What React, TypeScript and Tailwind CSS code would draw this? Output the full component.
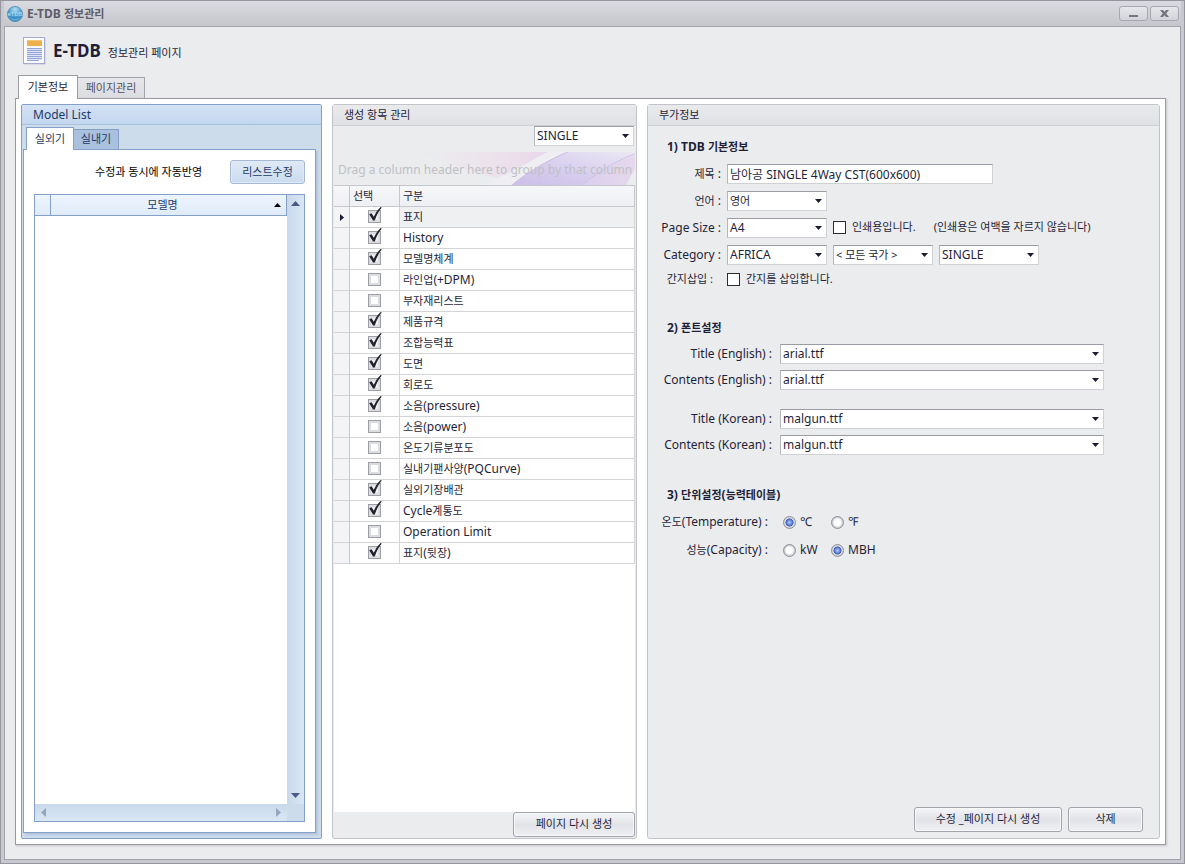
import React from "react";

const HANGUL = /([\u3131-\u318e\uac00-\ud7a3]+(?:\s+[\u3131-\u318e\uac00-\ud7a3]+)*)/;

/** Sets Hangul runs one pixel smaller than the Latin text around them. */
function T({ children }: { children: string }) {
  return (
    <>
      {children.split(HANGUL).map((part, i) =>
        i % 2 === 1 ? (
          <span key={i} className="text-[11px]">
            {part}
          </span>
        ) : (
          part
        )
      )}
    </>
  );
}

function Triangle({ dir, className }: { dir: "up" | "down" | "left" | "right"; className: string }) {
  const d = {
    up: "M0 5 L4.5 0 L9 5 Z",
    down: "M0 0 L9 0 L4.5 5 Z",
    left: "M5 0 L5 9 L0 4.5 Z",
    right: "M0 0 L5 4.5 L0 9 Z",
  }[dir];
  const vertical = dir === "up" || dir === "down";
  return (
    <svg
      className={className}
      width={vertical ? 9 : 5}
      height={vertical ? 5 : 9}
      viewBox={vertical ? "0 0 9 5" : "0 0 5 9"}
      aria-hidden="true"
    >
      <path d={d} fill="currentColor" />
    </svg>
  );
}

function Select({
  id,
  label,
  options,
  className,
  small,
}: {
  id?: string;
  label?: string;
  options: string[];
  className: string;
  small?: boolean;
}) {
  return (
    <span className={`relative inline-flex h-5 ${className}`}>
      <select
        id={id}
        aria-label={label}
        className={`h-5 w-full appearance-none border border-[#d0d1d5] border-t-[#9a9ba3] border-l-[#b5b6bc] bg-white pl-[2px] pr-4 leading-[18px] outline-none ${
          small ? "text-[11px]" : "text-xs"
        }`}
      >
        {options.map((o) => (
          <option key={o}>{o}</option>
        ))}
      </select>
      <svg
        className="pointer-events-none absolute right-[5px] top-2 text-[#1b1b33]"
        width="7"
        height="4"
        viewBox="0 0 7 4"
        aria-hidden="true"
      >
        <path d="M0 0 H7 L3.5 4 Z" fill="currentColor" />
      </svg>
    </span>
  );
}

function GridCheck({ label, checked }: { label: string; checked: boolean }) {
  return (
    <span className="relative mx-auto block size-[13px]">
      <input
        type="checkbox"
        defaultChecked={checked}
        aria-label={label}
        className="peer block size-[13px] appearance-none border border-[#9c9da5] bg-white shadow-[inset_0_0_0_2px_#dcdde1] checked:bg-[#f0f0f3]"
      />
      <svg
        className="pointer-events-none absolute -top-1 left-0 hidden peer-checked:block"
        width="14"
        height="16"
        viewBox="0 0 14 16"
        aria-hidden="true"
      >
        <path d="M1.2 8.2 L3.6 7.2 L5.8 10.8 C7.4 7.2 9.6 3.8 12.6 1 L13.8 1.6 C10.8 5.2 8.6 9.2 6.8 14.4 L5 14.4 Z" fill="#23232f" />
      </svg>
    </span>
  );
}

function PlainCheck({ id }: { id: string }) {
  return (
    <input
      id={id}
      type="checkbox"
      className="size-[13px] shrink-0 appearance-none border border-[#2b2b30] bg-white checked:bg-[#2b2b30]"
    />
  );
}

function Radio({ name, label, checked }: { name: string; label: string; checked?: boolean }) {
  return (
    <label className="flex w-12 items-center gap-1 whitespace-nowrap">
      <input
        type="radio"
        name={name}
        defaultChecked={checked}
        className="size-[13px] shrink-0 appearance-none rounded-full border border-[#8f9098] bg-[radial-gradient(circle,#ffffff_40%,#cfd0d6_66%)] checked:bg-[radial-gradient(circle_at_center,#b4c9f6_0,#6a8bdb_30%,#3d5cb4_48%,#e4e6ee_56%,#cfd0d6_68%)]"
      />
      {label}
    </label>
  );
}

function Button({ className, children }: { className: string; children: string }) {
  return (
    <button
      type="button"
      className={`rounded-[3px] border border-[#a2a3ab] bg-linear-to-b from-[#f4f5f7] via-[#e1e3e8] to-[#eff0f3] text-[11px] shadow-[inset_0_0_0_1px_#f7f8fa] ${className}`}
    >
      {children}
    </button>
  );
}

function Panel({ title, className, children }: { title: string; className?: string; children: React.ReactNode }) {
  return (
    <section className={`flex min-w-0 flex-col rounded-[3px] border border-[#c3c4c9] bg-[#ebecee] ${className ?? ""}`}>
      <h2 className="h-[21px] border-b border-[#cfd0d4] bg-linear-to-b from-[#e9eaec] to-[#e0e1e5] pl-[11px] text-[11px] leading-5">
        {title}
      </h2>
      {children}
    </section>
  );
}

function Field({ id, label, wide, children }: { id?: string; label: string; wide?: boolean; children: React.ReactNode }) {
  return (
    <div className={`flex items-center ${wide ? "h-[26px]" : "h-[27px]"}`}>
      <label htmlFor={id} className={`shrink-0 whitespace-nowrap text-right ${wide ? "w-[132px] pr-2" : "w-[72px] pr-[6px]"}`}>
        <T>{label}</T>
      </label>
      {children}
    </div>
  );
}

const ITEMS: [string, boolean][] = [
  ["표지", true],
  ["History", true],
  ["모델명체계", true],
  ["라인업(+DPM)", false],
  ["부자재리스트", false],
  ["제품규격", true],
  ["조합능력표", true],
  ["도면", true],
  ["회로도", true],
  ["소음(pressure)", true],
  ["소음(power)", false],
  ["온도기류분포도", false],
  ["실내기팬사양(PQCurve)", false],
  ["실외기장배관", true],
  ["Cycle계통도", true],
  ["Operation Limit", false],
  ["표지(뒷장)", true],
];

function TitleBar() {
  return (
    <header className="flex h-[25px] items-center bg-linear-to-b from-[#dadbe1] to-[#c6c7cd] pl-[3px] pr-[2px]">
      <svg width="16" height="16" viewBox="0 0 16 16" aria-hidden="true">
        <defs>
          <radialGradient id="globe" cx="0.5" cy="0.2" r="0.85">
            <stop offset="0" stopColor="#b4dcf0" />
            <stop offset="0.5" stopColor="#4a9fd0" />
            <stop offset="1" stopColor="#2b78b2" />
          </radialGradient>
        </defs>
        <circle cx="8" cy="8" r="7.6" fill="url(#globe)" stroke="#4b8db8" strokeWidth="0.8" />
        <path d="M2 11 C5 14 11 14 14 11 C12 15.5 4 15.5 2 11 Z" fill="#7cc8ea" opacity="0.7" />
        <text x="8" y="10" fontSize="6" textAnchor="middle" fill="#b9e2f5" fontFamily="Noto Sans">
          eTDB
        </text>
      </svg>
      <h1 className="ml-1 flex-1 text-xs font-bold text-[#5d5d6b]">
        <T>E-TDB 정보관리</T>
      </h1>
      <div className="flex gap-[2px]">
        <button
          type="button"
          aria-label="최소화"
          className="flex h-[15px] w-[29px] items-end justify-center rounded-[3px] border border-[#a6a7af] bg-linear-to-b from-[#e6e7eb] to-[#d2d3d8] pb-[3px]"
        >
          <svg width="9" height="2" viewBox="0 0 9 2" aria-hidden="true">
            <path d="M0 0 H9 V2 H0 Z" fill="#75767f" />
          </svg>
        </button>
        <button
          type="button"
          aria-label="닫기"
          className="flex h-[15px] w-[29px] items-center justify-center rounded-[3px] border border-[#a6a7af] bg-linear-to-b from-[#e6e7eb] to-[#d2d3d8]"
        >
          <svg width="9" height="7" viewBox="0 0 9 7" aria-hidden="true">
            <path d="M0 0 H3 L4.5 1.8 L6 0 H9 L6.2 3.5 L9 7 H6 L4.5 5.2 L3 7 H0 L2.8 3.5 Z" fill="#75767f" />
          </svg>
        </button>
      </div>
    </header>
  );
}

function ModelList() {
  return (
    <section className="flex min-w-0 flex-col rounded-[2px] border border-[#84a0c8] bg-[#cddceb] text-[#1f3a66]">
      <h2 className="h-5 border-b border-[#a9c0df] bg-linear-to-b from-[#d4e3f5] to-[#c3d7f0] pl-[11px] text-xs leading-5">
        Model List
      </h2>
      <div role="tablist" className="flex items-end pl-1 pt-[2px] text-[11px]">
        <button
          type="button"
          role="tab"
          aria-selected="true"
          className="z-10 -mb-px h-[23px] w-12 border border-b-0 border-[#84a0c8] bg-white"
        >
          실외기
        </button>
        <button
          type="button"
          role="tab"
          aria-selected="false"
          className="h-5 w-[45px] border border-b-0 border-l-0 border-[#84a0c8] bg-[#a9c1de]"
        >
          실내기
        </button>
      </div>
      <div className="mb-[5px] ml-px mr-[5px] flex flex-1 flex-col border border-[#84a0c8] bg-white p-[10px] shadow-[2px_2px_2px_#b3c3dc]">
        <div className="mb-[10px] flex items-center justify-end gap-7 text-[11px]">
          <span className="text-black">수정과 동시에 자동반영</span>
          <button
            type="button"
            className="h-6 w-[75px] rounded-[3px] border border-[#a5b8d4] bg-linear-to-b from-[#dfe9f5] to-[#cbdcef] shadow-[inset_0_0_0_1px_#dfeaf6]"
          >
            리스트수정
          </button>
        </div>
        <div className="flex flex-1 border border-[#84a0c8]">
          <div className="flex flex-1 flex-col">
            <table className="w-full table-fixed border-separate border-spacing-0 text-[11px]">
              <colgroup>
                <col className="w-4" />
                <col />
              </colgroup>
              <thead>
                <tr className="h-[21px] bg-linear-to-b from-[#edf5fd] to-[#dfebf9]">
                  <td className="border-b border-r border-[#84a0c8] p-0" />
                  <th className="relative border-b border-r border-[#84a0c8] p-0 pr-3 font-normal">
                    모델명
                    <svg className="absolute right-[5px] top-2 text-black" width="7" height="4" viewBox="0 0 7 4" aria-hidden="true">
                      <path d="M0 4 H7 L3.5 0 Z" fill="currentColor" />
                    </svg>
                  </th>
                </tr>
              </thead>
            </table>
            <div className="flex-1" />
            <div className="flex h-[17px] items-center justify-between bg-linear-to-b from-[#c9d9ea] to-[#d9e6f4] px-[6px] text-[#93a6be]">
              <button type="button" aria-label="왼쪽으로">
                <Triangle dir="left" className="block" />
              </button>
              <button type="button" aria-label="오른쪽으로">
                <Triangle dir="right" className="block" />
              </button>
            </div>
          </div>
          <div className="flex w-[17px] flex-col bg-linear-to-r from-[#c9d9ea] to-[#d9e6f4] text-[#4a5a86]">
            <button type="button" aria-label="위로" className="flex h-[17px] items-center justify-center">
              <Triangle dir="up" className="block" />
            </button>
            <div className="flex-1" />
            <button type="button" aria-label="아래로" className="flex h-[17px] items-center justify-center">
              <Triangle dir="down" className="block" />
            </button>
            <div className="h-[17px] bg-[#cddceb]" />
          </div>
        </div>
      </div>
    </section>
  );
}

function ItemPanel() {
  return (
    <Panel title="생성 항목 관리">
      <div className="flex justify-end pr-[2px]">
        <Select label="유형" options={["SINGLE", "MULTI"]} className="w-[100px]" />
      </div>
      <div className="flex flex-1 flex-col px-px pt-[6px]">
        <div className="relative h-[33px] overflow-hidden">
          <svg className="absolute right-0 top-0 h-full w-[215px]" viewBox="0 0 215 33" preserveAspectRatio="none" aria-hidden="true">
            <defs>
              <linearGradient id="pink" x1="0" x2="1">
                <stop offset="0" stopColor="#ecdfea" stopOpacity="0" />
                <stop offset="0.8" stopColor="#ecd7ea" />
                <stop offset="1" stopColor="#e6d0ea" />
              </linearGradient>
              <linearGradient id="violet" x1="0" y1="1" x2="1" y2="0">
                <stop offset="0" stopColor="#cbbfe8" />
                <stop offset="0.4" stopColor="#d6ccee" />
                <stop offset="1" stopColor="#ebe8f3" />
              </linearGradient>
              <linearGradient id="lilac" x1="0" x2="1">
                <stop offset="0" stopColor="#d9cfee" />
                <stop offset="1" stopColor="#e6d8ec" />
              </linearGradient>
            </defs>
            <path d="M0 0 H128 C112 8 96 18 76 26 C55 20 25 12 0 0 Z" fill="url(#pink)" opacity="0.75" />
            <path d="M128 0 H148 C128 8 108 20 92 33 H60 C88 24 108 10 128 0 Z" fill="#f1eff4" opacity="0.7" />
            <path d="M148 0 H215 V4 C195 9 180 20 162 33 H92 C108 20 128 8 148 0 Z" fill="url(#violet)" />
            <path d="M215 4 V16 L206 33 H162 C180 20 195 9 215 4 Z" fill="url(#lilac)" />
            <path d="M92 33 C108 20 128 8 148 0" fill="none" stroke="#c9bae6" strokeWidth="1" />
            <path d="M162 33 C180 19 195 9 215 2" fill="none" stroke="#cdc0e8" strokeWidth="1" />
          </svg>
          <p className="relative whitespace-nowrap pl-1 text-xs leading-[35px] text-[#bfc0c5]">
            Drag a column header here to group by that column
          </p>
        </div>
        <div className="flex-1 bg-white">
          <table className="w-full table-fixed border-separate border-spacing-0 border-t border-[#c6c7cc] text-xs">
            <colgroup>
              <col className="w-4" />
              <col className="w-[50px]" />
              <col />
            </colgroup>
            <thead>
              <tr className="h-[21px] bg-linear-to-b from-[#f6f7f9] to-[#eeeff2] text-left text-[11px]">
                <td className="border-b border-r border-[#c6c7cc] p-0" />
                <th className="border-b border-r border-[#c6c7cc] p-0 pl-[3px] font-normal">선택</th>
                <th className="border-b border-r border-[#c6c7cc] p-0 pl-[3px] font-normal">구분</th>
              </tr>
            </thead>
            <tbody>
              {ITEMS.map(([name, checked], i) => (
                <tr key={name} className="h-[21px]">
                  <td className="border-b border-r border-[#d3d4d8] border-r-[#c6c7cc] bg-[#f3f4f6] p-0">
                    {i === 0 && (
                      <svg className="mx-auto block" width="4" height="7" viewBox="0 0 4 7" aria-hidden="true">
                        <path d="M0 0 L4 3.5 L0 7 Z" fill="#1b1b33" />
                      </svg>
                    )}
                  </td>
                  <td className="border-b border-r border-[#d3d4d8] p-0 pb-px">
                    <GridCheck label={name} checked={checked} />
                  </td>
                  <td className={`border-b border-r border-[#d3d4d8] p-0 pl-[3px] leading-5 ${i === 0 ? "bg-[#eff0f2]" : ""}`}>
                    <T>{name}</T>
                  </td>
                </tr>
              ))}
            </tbody>
          </table>
        </div>
      </div>
      <div className="flex justify-end pb-px pr-px">
        <Button className="h-[25px] w-[122px]">페이지 다시 생성</Button>
      </div>
    </Panel>
  );
}

function DetailPanel() {
  const heading = "text-xs font-bold leading-5 pl-[19px]";
  return (
    <Panel title="부가정보">
      <div className="flex-1 pt-[11px]">
        <h3 className={heading}>
          <T>1) TDB 기본정보</T>
        </h3>
        <div className="mt-[3px] pl-[7px]">
          <Field id="title" label="제목 :">
            <input
              id="title"
              defaultValue="남아공 SINGLE 4Way CST(600x600)"
              className="h-5 w-[266px] border border-[#d0d1d5] border-t-[#9a9ba3] border-l-[#b5b6bc] bg-white px-[2px] text-xs outline-none"
            />
          </Field>
          <Field id="lang" label="언어 :">
            <Select id="lang" options={["영어", "한국어"]} className="w-[100px]" small />
          </Field>
          <Field id="size" label="Page Size :">
            <Select id="size" options={["A4", "Letter"]} className="w-[100px]" />
            <span className="ml-[6px] flex items-center gap-[6px] text-[11px]">
              <PlainCheck id="print" />
              <label htmlFor="print" className="whitespace-nowrap">인쇄용입니다.</label>
              <span className="ml-3 whitespace-nowrap">(인쇄용은 여백을 자르지 않습니다)</span>
            </span>
          </Field>
          <Field id="region" label="Category :">
            <div className="flex gap-[6px]">
              <Select id="region" options={["AFRICA", "ASIA"]} className="w-[100px]" />
              <Select label="국가" options={["< 모든 국가 >"]} className="w-[100px]" small />
              <Select label="제품군" options={["SINGLE", "MULTI"]} className="w-[100px]" />
            </div>
          </Field>
          <div className="flex h-[23px] items-center gap-[6px] text-[11px]">
            <span className="w-[66px] pr-2 text-right">간지삽입 :</span>
            <PlainCheck id="divider" />
            <label htmlFor="divider">간지를 삽입합니다.</label>
          </div>
        </div>

        <h3 className={`mt-[27px] ${heading}`}>
          <T>2) 폰트설정</T>
        </h3>
        <div className="mr-[55px] mt-[3px] flex flex-col">
          <Field wide id="te" label="Title (English) :">
            <Select id="te" options={["arial.ttf"]} className="flex-1" />
          </Field>
          <Field wide id="ce" label="Contents (English) :">
            <Select id="ce" options={["arial.ttf"]} className="flex-1" />
          </Field>
          <div className="h-[13px]" />
          <Field wide id="tk" label="Title (Korean) :">
            <Select id="tk" options={["malgun.ttf"]} className="flex-1" />
          </Field>
          <Field wide id="ck" label="Contents (Korean) :">
            <Select id="ck" options={["malgun.ttf"]} className="flex-1" />
          </Field>
        </div>

        <h3 className={`mt-[27px] ${heading}`}>
          <T>3) 단위설정(능력테이블)</T>
        </h3>
        <div className="mt-[3px]">
          <div role="radiogroup" aria-label="온도" className="flex h-7 items-center">
            <span className="mr-[15px] w-[120px] whitespace-nowrap text-right">
              <T>온도(Temperature) :</T>
            </span>
            <Radio name="temp" label="℃" checked />
            <Radio name="temp" label="℉" />
          </div>
          <div role="radiogroup" aria-label="성능" className="flex h-7 items-center">
            <span className="mr-[15px] w-[120px] whitespace-nowrap text-right">
              <T>성능(Capacity) :</T>
            </span>
            <Radio name="cap" label="kW" />
            <Radio name="cap" label="MBH" checked />
          </div>
        </div>
      </div>
      <div className="flex justify-end gap-[6px] pb-[6px] pr-4">
        <Button className="h-[25px] w-[148px]">수정 _페이지 다시 생성</Button>
        <Button className="h-[25px] w-[75px]">삭제</Button>
      </div>
    </Panel>
  );
}

export default function App() {
  return (
    <div className="flex min-h-screen flex-col border border-[#94959d] bg-[#c8c9d0] px-[3px] pb-[3px] font-['Noto_Sans','Noto_Sans_CJK_KR',sans-serif] text-xs text-[#1f1f38]">
      <TitleBar />
      <main className="flex flex-1 flex-col border border-[#a2a3ab] bg-[#ebecee] pb-[14px] pl-[10px] pr-[14px]">
        <div className="flex h-12 items-center gap-[6px] pl-2">
          <svg width="24" height="28" viewBox="0 0 24 28" aria-hidden="true">
            <rect x="1" y="1" width="21.5" height="26.5" fill="#c3c9e0" />
            <rect x="0.5" y="0.5" width="21" height="26" fill="#fdfdff" stroke="#a3abd0" />
            <rect x="4" y="3" width="15" height="6" fill="#eeb04b" />
            <rect x="4" y="3" width="15" height="1" fill="#f3c77a" />
            <path
              d="M4 11.5 H19 M4 13.5 H19 M4 15.5 H19 M4 17.5 H19 M4 19.5 H19 M4 21.5 H19 M4 23.5 H16"
              stroke="#93a5d8"
              strokeWidth="1"
            />
            <path
              d="M4 12.5 H19 M4 14.5 H19 M4 16.5 H19 M4 18.5 H19 M4 20.5 H19 M4 22.5 H19"
              stroke="#dfe5f6"
              strokeWidth="1"
            />
          </svg>
          <p className="flex items-baseline gap-[7px]">
            <strong className="text-[17px]">E-TDB</strong>
            <span className="text-[11px]">정보관리 페이지</span>
          </p>
        </div>
        <div role="tablist" className="flex items-end pl-[3px] text-[11px]">
          <button
            type="button"
            role="tab"
            aria-selected="true"
            className="z-10 -mb-px h-6 w-[60px] border border-b-0 border-[#9a9ba3] bg-white"
          >
            기본정보
          </button>
          <button
            type="button"
            role="tab"
            aria-selected="false"
            className="h-[21px] w-[67px] border border-b-0 border-l-0 border-[#a2a3ab] bg-linear-to-b from-[#e6e7ea] to-[#dcdde1] text-[#50505f]"
          >
            페이지관리
          </button>
        </div>
        <div className="grid flex-1 grid-cols-[301px_305px_minmax(0,1fr)] gap-[10px] border border-[#9a9ba3] bg-white p-[5px] shadow-[1px_1px_2px_#c3c4c9]">
          <ModelList />
          <ItemPanel />
          <DetailPanel />
        </div>
      </main>
    </div>
  );
}
